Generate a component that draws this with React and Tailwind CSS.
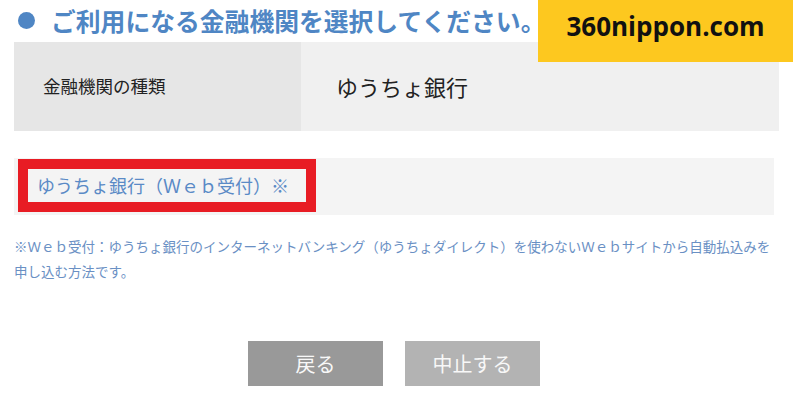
import React from "react";

const jp = { fontFamily: '"Noto Sans CJK JP", "Noto Sans", sans-serif' };

export default function App() {
  return (
    <div className="relative w-[793px] h-[396px] bg-white overflow-hidden" style={jp}>
      <div className="px-[14px]">
        <div className="h-[42px] flex items-center">
          <span className="ml-[4px] mb-[2px] w-[17px] h-[17px] rounded-full bg-[#4f86c4] shrink-0" />
          <h1 className="ml-[16px] mb-[2px] text-[24.8px] leading-none font-bold text-[#4f86c4] whitespace-nowrap">
            ご利用になる金融機関を選択してください。
          </h1>
        </div>
        <div className="flex h-[89px] w-[765px]">
          <div className="w-[287px] bg-[#e6e6e6] flex items-center pl-[29px] text-[17.5px] text-[#222]">
            金融機関の種類
          </div>
          <div className="flex-1 bg-[#f0f0f0] flex items-center pl-[35px] text-[22px] text-[#222]">
            ゆうちょ銀行
          </div>
        </div>
        <div className="mt-[27px] w-[760px] h-[57px] bg-[#f4f4f4] pt-[1px] pl-[4px]">
          <div className="inline-flex items-center h-[53px] border-[10px] border-[#e81c24] bg-[#f4f4f4] pl-[9px] pr-[17px] text-[18px] text-[#5a8ac6] whitespace-nowrap">
            ゆうちょ銀行（Ｗｅｂ受付）※
          </div>
        </div>
        <p className="mt-[19px] w-[765px] text-[13.5px] leading-[25px] text-[#6a90c4]">
          ※Ｗｅｂ受付：ゆうちょ銀行のインターネットバンキング（ゆうちょダイレクト）を使わないＷｅｂサイトから自動払込みを申し込む方法です。
        </p>
      </div>
      <div className="mt-[57px] flex justify-center gap-[22px] pr-[5px]">
        <button className="w-[135px] h-[45px] bg-[#999999] text-[20px] text-[#f8f8f8]">戻る</button>
        <button className="w-[135px] h-[45px] bg-[#b3b3b3] text-[20px] text-[#f8f8f8]">中止する</button>
      </div>
      <div
        className="absolute top-0 left-[538px] w-[255px] h-[62px] bg-[#fdc81f] flex items-center justify-center pb-[9px] text-[26px] font-bold text-[#111]"
        style={{ fontFamily: '"Open Sans", sans-serif' }}
      >
        360nippon.com
      </div>
    </div>
  );
}
